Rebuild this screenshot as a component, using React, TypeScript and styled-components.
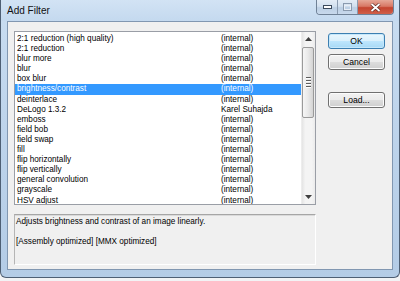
import React from 'react'
import styled, { createGlobalStyle } from 'styled-components'

const FONT = `"Liberation Sans", Arial, sans-serif`

const filters: [string, string][] = [
  ['2:1 reduction (high quality)', '(internal)'],
  ['2:1 reduction', '(internal)'],
  ['blur more', '(internal)'],
  ['blur', '(internal)'],
  ['box blur', '(internal)'],
  ['brightness/contrast', '(internal)'],
  ['deinterlace', '(internal)'],
  ['DeLogo 1.3.2', 'Karel Suhajda'],
  ['emboss', '(internal)'],
  ['field bob', '(internal)'],
  ['field swap', '(internal)'],
  ['fill', '(internal)'],
  ['flip horizontally', '(internal)'],
  ['flip vertically', '(internal)'],
  ['general convolution', '(internal)'],
  ['grayscale', '(internal)'],
  ['HSV adjust', '(internal)'],
]

const SELECTED = 5

const GlobalStyle = createGlobalStyle`
  html, body {
    margin: 0;
    padding: 0;
    background: #f2f3f5;
  }
  body {
    font-family: ${FONT};
  }
`

const ArrowIcon = ({ down }: { down?: boolean }) => (
  <svg width="7" height="4" viewBox="0 0 7 4">
    <path d={down ? 'M0 0 H7 L3.5 4 Z' : 'M0 4 H7 L3.5 0 Z'} fill="#3f3f3f" />
  </svg>
)

export default function App() {
  return (
    <>
      <GlobalStyle />
      <Window>
        <TitleBar>
          <Title>Add Filter</Title>
          <CaptionButtons>
            <CaptionButton width={20}>
              <svg width="9" height="4" viewBox="0 0 9 4">
                <rect x="0.5" y="0.5" width="8" height="3" fill="#fff" stroke="#3b4a5c" />
              </svg>
            </CaptionButton>
            <CaptionButton width={19}>
              <svg width="9" height="8" viewBox="0 0 9 8">
                <rect x="0.5" y="0.5" width="8" height="7" fill="none" stroke="#8a9aae" />
                <rect x="1.5" y="2.5" width="6" height="4" fill="none" stroke="#e8eef6" />
              </svg>
            </CaptionButton>
            <CloseButton>
              <svg width="11" height="9" viewBox="0 0 11 9">
                <path d="M1.5 1 L9.5 8 M9.5 1 L1.5 8" stroke="#5a2a22" strokeWidth="3.2" />
                <path d="M1.5 1 L9.5 8 M9.5 1 L1.5 8" stroke="#ffffff" strokeWidth="1.8" />
              </svg>
            </CloseButton>
          </CaptionButtons>
        </TitleBar>
        <Frame>
          <Client>
            <LeftColumn>
              <ListBox>
                <Items>
                  {filters.map(([name, author], i) => (
                    <Row key={name} selected={i === SELECTED}>
                      <NameCell>{name}</NameCell>
                      <AuthorCell>{author}</AuthorCell>
                    </Row>
                  ))}
                </Items>
                <ScrollBar>
                  <ArrowButton>
                    <ArrowIcon />
                  </ArrowButton>
                  <Track>
                    <Thumb>
                      <Grip />
                      <Grip />
                      <Grip />
                      <Grip />
                    </Thumb>
                  </Track>
                  <ArrowButton>
                    <ArrowIcon down />
                  </ArrowButton>
                </ScrollBar>
              </ListBox>
              <Description>
                <DescLine>Adjusts brightness and contrast of an image linearly.</DescLine>
                <DescLine>&nbsp;</DescLine>
                <DescLine>[Assembly optimized] [MMX optimized]</DescLine>
              </Description>
            </LeftColumn>
            <ButtonColumn>
              <PushButton isDefault>OK</PushButton>
              <PushButton>Cancel</PushButton>
              <Spacer />
              <PushButton>Load...</PushButton>
            </ButtonColumn>
          </Client>
        </Frame>
      </Window>
    </>
  )
}

const Window = styled.div`
  width: 400px;
  height: 278px;
  box-sizing: border-box;
  border: 1px solid #4e5f74;
  border-top: none;
  border-radius: 0 0 6px 6px;
  background: linear-gradient(to bottom, #c9ddf1 0%, #bfd5ec 40%, #b4cce6 100%);
  display: flex;
  flex-direction: column;
  overflow: hidden;
`

const TitleBar = styled.div`
  height: 21px;
  display: flex;
  justify-content: space-between;
  align-items: flex-start;
  padding-left: 6px;
  background: linear-gradient(to bottom, #d2e3f4 0%, #c4d9ef 100%);
`

const Title = styled.div`
  font-family: ${FONT};
  font-size: 10px;
  color: #111;
  line-height: 12px;
  margin-top: 5px;
`

const CaptionButtons = styled.div`
  display: flex;
  margin-right: 5px;
  height: 14px;
  border: 1px solid #6f8196;
  border-top: none;
  border-radius: 0 0 4px 4px;
  overflow: hidden;
`

const CaptionButton = styled.div<{ width: number }>`
  width: ${(p) => p.width}px;
  height: 14px;
  display: flex;
  align-items: center;
  justify-content: center;
  border-right: 1px solid #8a9bb0;
  background: linear-gradient(to bottom, #e3ecf6 0%, #d2e0ef 45%, #bccfe4 55%, #c8d9ec 100%);
`

const CloseButton = styled.div`
  width: 35px;
  height: 14px;
  display: flex;
  align-items: center;
  justify-content: center;
  background: linear-gradient(to bottom, #e6a797 0%, #d87865 45%, #c4442f 55%, #d0604a 100%);
`

const Frame = styled.div`
  flex: 1;
  padding: 0 6px 7px 6px;
  display: flex;
`

const Client = styled.div`
  flex: 1;
  background: #f0f0f0;
  border: 1px solid #8197b1;
  display: grid;
  grid-template-columns: 302px 57px;
  column-gap: 12px;
  padding: 9px 7px 4px 6px;
  font-family: ${FONT};
  font-size: 8.2px;
  color: #000;
`

const LeftColumn = styled.div`
  display: flex;
  flex-direction: column;
  gap: 9px;
`

const ListBox = styled.div`
  height: 174px;
  box-sizing: border-box;
  border: 1px solid #9a9ea6;
  background: #fff;
  display: flex;
  overflow: hidden;
`

const Items = styled.div`
  flex: 1;
  padding-top: 2px;
  overflow: hidden;
`

const Row = styled.div<{ selected?: boolean }>`
  display: flex;
  height: 10.1px;
  line-height: 10.1px;
  padding-left: 2px;
  white-space: nowrap;
  background: ${(p) => (p.selected ? '#3399ff' : 'transparent')};
  color: ${(p) => (p.selected ? '#fff' : '#000')};
`

const NameCell = styled.div`
  width: 204px;
`

const AuthorCell = styled.div`
  flex: 1;
`

const ScrollBar = styled.div`
  width: 13px;
  display: flex;
  flex-direction: column;
  background: linear-gradient(to right, #e4e4e4 0%, #f4f4f4 25%, #f4f4f4 75%, #ebebeb 100%);
  border-left: 1px solid #ededed;
`

const ArrowButton = styled.div`
  height: 14px;
  display: flex;
  align-items: center;
  justify-content: center;
`

const Track = styled.div`
  flex: 1;
  padding-top: 1px;
`

const Thumb = styled.div`
  height: 71px;
  box-sizing: border-box;
  margin: 0 1px 0 0;
  border: 1px solid #9a9a9a;
  border-radius: 2px;
  background: linear-gradient(to right, #f6f6f6 0%, #e9e9e9 50%, #d4d4d4 100%);
  display: flex;
  flex-direction: column;
  align-items: center;
  justify-content: center;
  gap: 1px;
`

const Grip = styled.div`
  width: 5px;
  height: 1px;
  background: #5e5e5e;
  border-bottom: 1px solid #fff;
`

const Description = styled.div`
  height: 51px;
  box-sizing: border-box;
  border-top: 1px solid #a6a6a6;
  border-left: 1px solid #b5b5b5;
  border-right: 1px solid #ffffff;
  border-bottom: 1px solid #ffffff;
  box-shadow: inset 0 1px 0 #dadada;
  padding: 2px 0 0 1px;
`

const DescLine = styled.div`
  height: 10px;
  line-height: 10px;
  white-space: nowrap;
`

const ButtonColumn = styled.div`
  display: flex;
  flex-direction: column;
  gap: 5px;
  padding-top: 2px;
`

const Spacer = styled.div`
  height: 12px;
`

const PushButton = styled.div<{ isDefault?: boolean }>`
  height: 16px;
  box-sizing: border-box;
  border: 1px solid ${(p) => (p.isDefault ? '#3c7fb1' : '#707070')};
  border-radius: 3px;
  background: ${(p) =>
    p.isDefault
      ? 'linear-gradient(to bottom, #eaf6fd 0%, #d9f0fc 50%, #bee6fd 50%, #a7d9f5 100%)'
      : 'linear-gradient(to bottom, #f2f2f2 0%, #ebebeb 50%, #dddddd 50%, #cfcfcf 100%)'};
  box-shadow: inset 0 0 0 1px ${(p) => (p.isDefault ? '#c6e8fb' : '#fcfcfc')};
  display: flex;
  align-items: center;
  justify-content: center;
  font-size: 8.6px;
  color: #000;
`
